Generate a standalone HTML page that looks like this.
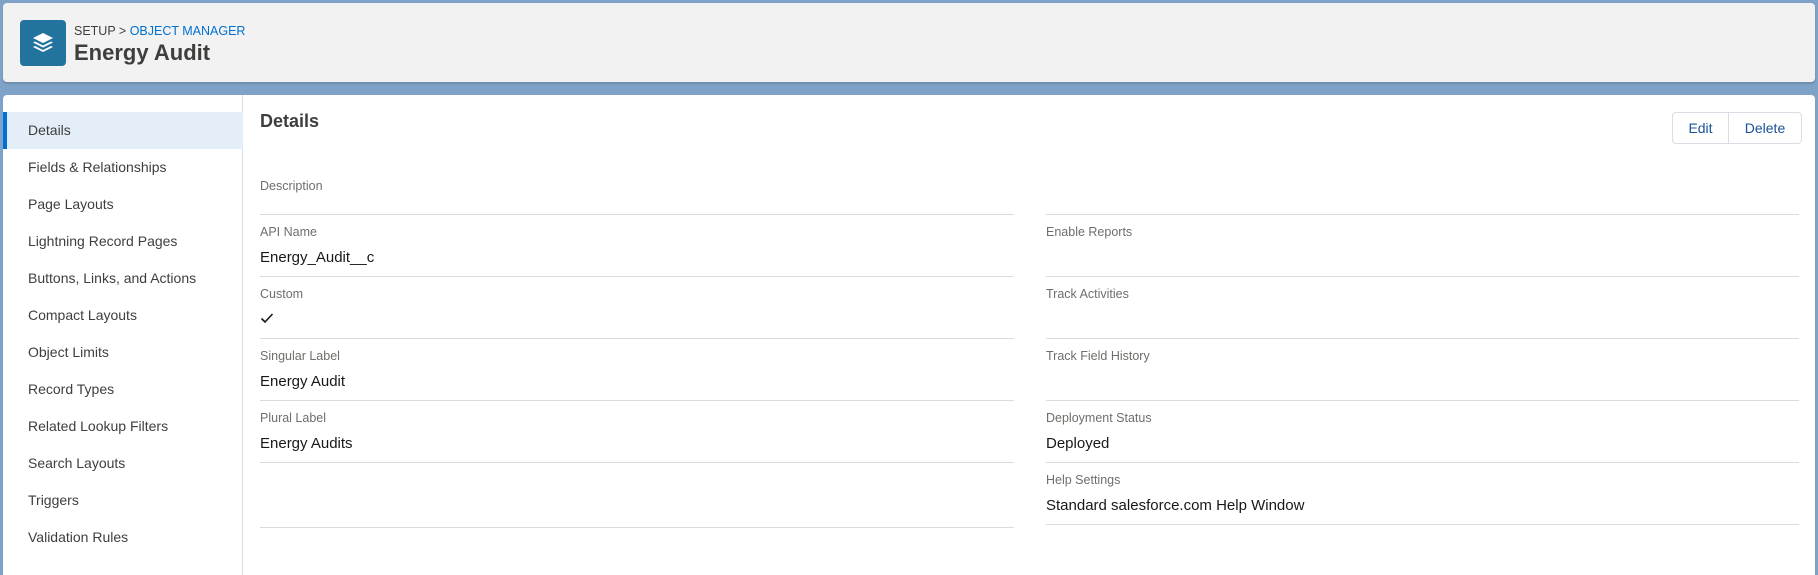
<!DOCTYPE html>
<html><head><meta charset="utf-8"><style>
*{box-sizing:border-box;margin:0;padding:0}
body{width:1818px;height:572px;overflow:hidden;background:#7fa3c8;font-family:"Liberation Sans",sans-serif;color:#3e3e3c;position:relative}
.hdr{position:absolute;left:3px;top:3px;width:1812px;height:79px;background:#f2f2f2;border-radius:4px;box-shadow:0 2px 2px rgba(0,0,0,.15)}
.icon{position:absolute;left:17px;top:17px;width:46px;height:46px;background:#23739f;border-radius:4px}
.crumb{position:absolute;left:71px;top:21px;font-size:12.5px;color:#3e3e3c}
.crumb span{color:#0070d2}
.title{position:absolute;left:71px;top:37px;font-size:22px;font-weight:bold;color:#3e3e3c}
.main{position:absolute;left:3px;top:95px;width:1812px;height:480px;background:#fff;border-radius:4px 4px 0 0}
.side{position:absolute;left:0;top:0;width:240px;height:480px;border-right:1px solid #d8dde6}
.item{position:absolute;left:0;width:240px;height:37px;line-height:37px;padding-left:25px;font-size:14px;color:#3e3e3c}
.sel{background:#e3eef9;border-left:4px solid #0070d2;padding-left:21px}
h2{position:absolute;left:257px;top:16px;font-size:18px;font-weight:bold;color:#3e3e3c}
.btns{position:absolute;left:1669px;top:17px;height:32px;border:1px solid #d8dde6;border-radius:4px;display:flex;font-size:14px;color:#1b5297;background:#fff}
.btns div{line-height:30px;text-align:center}
.lbl{position:absolute;font-size:12.5px;color:#706e6b}
.val{position:absolute;font-size:15px;color:#181818}
.ln{position:absolute;height:1px;background:#dddbda}
</style></head><body>
<div class="hdr">
<div class="icon"><svg width="46" height="46" viewBox="0 0 46 46"><g fill="#fff"><path d="M23 13 L33 18 L23 23 L13 18Z"/><path d="M15 21.5 L23 25.5 L31 21.5 L33 22.5 L23 27.5 L13 22.5Z"/><path d="M15 26 L23 30 L31 26 L33 27 L23 32 L13 27Z"/></g></svg></div>
<div class="crumb">SETUP &gt; <span>OBJECT MANAGER</span></div>
<div class="title">Energy Audit</div>
</div>
<div class="main">
<div class="side">
<div class="item sel" style="top:17px">Details</div>
<div class="item" style="top:54px">Fields &amp; Relationships</div>
<div class="item" style="top:91px">Page Layouts</div>
<div class="item" style="top:128px">Lightning Record Pages</div>
<div class="item" style="top:165px">Buttons, Links, and Actions</div>
<div class="item" style="top:202px">Compact Layouts</div>
<div class="item" style="top:239px">Object Limits</div>
<div class="item" style="top:276px">Record Types</div>
<div class="item" style="top:313px">Related Lookup Filters</div>
<div class="item" style="top:350px">Search Layouts</div>
<div class="item" style="top:387px">Triggers</div>
<div class="item" style="top:424px">Validation Rules</div>
</div>
<h2>Details</h2>
<div class="btns"><div style="width:56px;border-right:1px solid #d8dde6">Edit</div><div style="width:72px">Delete</div></div>

<div class="lbl" style="left:257px;top:84px">Description</div>
<div class="ln" style="left:257px;width:754px;top:119px"></div>
<div class="lbl" style="left:257px;top:130px">API Name</div>
<div class="val" style="left:257px;top:154px">Energy_Audit__c</div>
<div class="ln" style="left:257px;width:754px;top:181px"></div>
<div class="lbl" style="left:257px;top:192px">Custom</div>
<div class="val" style="left:257px;top:216px"><svg width="14" height="12" viewBox="0 0 14 12"><path d="M1.5 6.5 L5 10 L12.5 2" fill="none" stroke="#181818" stroke-width="1.6"/></svg></div>
<div class="ln" style="left:257px;width:754px;top:243px"></div>
<div class="lbl" style="left:257px;top:254px">Singular Label</div>
<div class="val" style="left:257px;top:278px">Energy Audit</div>
<div class="ln" style="left:257px;width:754px;top:305px"></div>
<div class="lbl" style="left:257px;top:316px">Plural Label</div>
<div class="val" style="left:257px;top:340px">Energy Audits</div>
<div class="ln" style="left:257px;width:754px;top:367px"></div>
<div class="ln" style="left:257px;width:754px;top:432px"></div>

<div class="ln" style="left:1043px;width:753px;top:119px"></div>
<div class="lbl" style="left:1043px;top:130px">Enable Reports</div>
<div class="ln" style="left:1043px;width:753px;top:181px"></div>
<div class="lbl" style="left:1043px;top:192px">Track Activities</div>
<div class="ln" style="left:1043px;width:753px;top:243px"></div>
<div class="lbl" style="left:1043px;top:254px">Track Field History</div>
<div class="ln" style="left:1043px;width:753px;top:305px"></div>
<div class="lbl" style="left:1043px;top:316px">Deployment Status</div>
<div class="val" style="left:1043px;top:340px">Deployed</div>
<div class="ln" style="left:1043px;width:753px;top:367px"></div>
<div class="lbl" style="left:1043px;top:378px">Help Settings</div>
<div class="val" style="left:1043px;top:402px">Standard salesforce.com Help Window</div>
<div class="ln" style="left:1043px;width:753px;top:429px"></div>
</div>
</body></html>
